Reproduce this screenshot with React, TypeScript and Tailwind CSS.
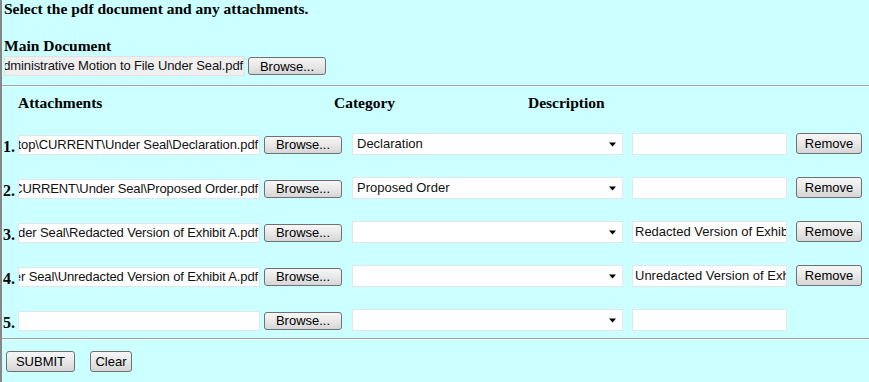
import React from 'react';

interface AttachmentRow {
  num: string;
  path: string;
  category: string;
  description: string;
  removable: boolean;
}

const rows: AttachmentRow[] = [
  {
    num: '1.',
    path: 'C:\\Users\\Desktop\\CURRENT\\Under Seal\\Declaration.pdf',
    category: 'Declaration',
    description: '',
    removable: true,
  },
  {
    num: '2.',
    path: 'C:\\Users\\Desktop\\CURRENT\\Under Seal\\Proposed Order.pdf',
    category: 'Proposed Order',
    description: '',
    removable: true,
  },
  {
    num: '3.',
    path: 'C:\\Users\\Desktop\\CURRENT\\Under Seal\\Redacted Version of Exhibit A.pdf',
    category: '',
    description: 'Redacted Version of Exhibit A',
    removable: true,
  },
  {
    num: '4.',
    path: 'C:\\Users\\Desktop\\CURRENT\\Under Seal\\Unredacted Version of Exhibit A.pdf',
    category: '',
    description: 'Unredacted Version of Exhibit A',
    removable: true,
  },
  { num: '5.', path: '', category: '', description: '', removable: false },
];

const serif = "font-['Liberation_Serif','Times_New_Roman',serif]";
const sans = "font-['Liberation_Sans',Arial,sans-serif]";

function Button({ label, className }: { label: string; className: string }) {
  return (
    <div
      className={`${sans} ${className} flex items-center justify-center shrink-0 rounded-[3px] border border-[#707070] bg-gradient-to-b from-[#f6f6f6] via-[#e8e8e8] to-[#d6d6d6] text-[13px] leading-none text-black`}
    >
      {label}
    </div>
  );
}

function FileBox({ value, className }: { value: string; className: string }) {
  // file path scrolled to its end, like the browser shows it
  return (
    <div
      className={`${sans} ${className} flex items-center justify-end overflow-hidden whitespace-nowrap shrink-0 text-[13px] tracking-[-0.12px] text-[#111] px-[1px]`}
    >
      <span>{value}</span>
    </div>
  );
}

function Hr() {
  return <div className="h-[2px] border-t border-[#a3a3a3] border-b border-b-[#e6ffff]" />;
}

export default function App() {
  return (
    <div className="w-[869px] h-[382px] bg-[#ccffff] border-l-2 border-[#878787] overflow-hidden">
      <div className={`${serif} font-bold text-[15.5px] leading-[17px] text-black pl-[2px]`}>
        Select the pdf document and any attachments.
      </div>

      <div className={`${serif} font-bold text-[15.5px] leading-[17px] text-black pl-[2px] mt-[20px]`}>
        Main Document
      </div>
      <div className="flex items-center mt-[2px] pl-[2px] h-[20px]">
        <FileBox
          value="C:\Users\Desktop\CURRENT\Under Seal\Administrative Motion to File Under Seal.pdf"
          className="w-[241px] h-[20px] bg-[#efefef] border border-[#e2e2e2]"
        />
        <Button label="Browse..." className="ml-[3px] w-[78px] h-[18px]" />
      </div>

      <div className="mt-[9px]">
        <Hr />
      </div>

      <div className={`${serif} font-bold text-[15.5px] leading-[17px] text-black flex mt-[7px] pl-[16px]`}>
        <div className="w-[316px]">Attachments</div>
        <div className="w-[194px]">Category</div>
        <div>Description</div>
      </div>

      <div className="flex flex-col gap-[22px] mt-[22px]">
        {rows.map((row) => (
          <div key={row.num} className="flex items-center h-[22px] pl-[1px]">
            <div className={`${serif} font-bold text-[16px] leading-[17px] text-black w-[15px] shrink-0 pt-[4px]`}>
              {row.num}
            </div>
            <FileBox
              value={row.path}
              className="w-[242px] h-[20px] mt-[2px] bg-white border border-[#e1e6eb]"
            />
            <Button label="Browse..." className="ml-[4px] w-[78px] h-[18px] mt-[1px]" />
            <div
              className={`${sans} ml-[10px] w-[271px] h-[22px] bg-white border border-[#e1e6eb] flex items-center justify-between pl-[4px] pr-[6px] text-[13px] text-[#111] shrink-0`}
            >
              <span>{row.category}</span>
              <svg width="7" height="5" viewBox="0 0 7 5">
                <path d="M0 0.5 H7 L3.5 4.5 Z" fill="#000" />
              </svg>
            </div>
            <div
              className={`${sans} ml-[9px] w-[155px] h-[22px] bg-white border border-[#e1e6eb] flex items-center overflow-hidden whitespace-nowrap pl-[2px] text-[13px] text-[#111] shrink-0`}
            >
              {row.description}
            </div>
            {row.removable && (
              <Button label="Remove" className="ml-[9px] w-[66px] h-[21px] -mt-[1px]" />
            )}
          </div>
        ))}
      </div>

      <div className="mt-[7px]">
        <Hr />
      </div>

      <div className="flex items-center gap-[15px] mt-[11px] pl-[4px]">
        <Button label="SUBMIT" className="w-[69px] h-[21px]" />
        <Button label="Clear" className="w-[42px] h-[21px]" />
      </div>
    </div>
  );
}
